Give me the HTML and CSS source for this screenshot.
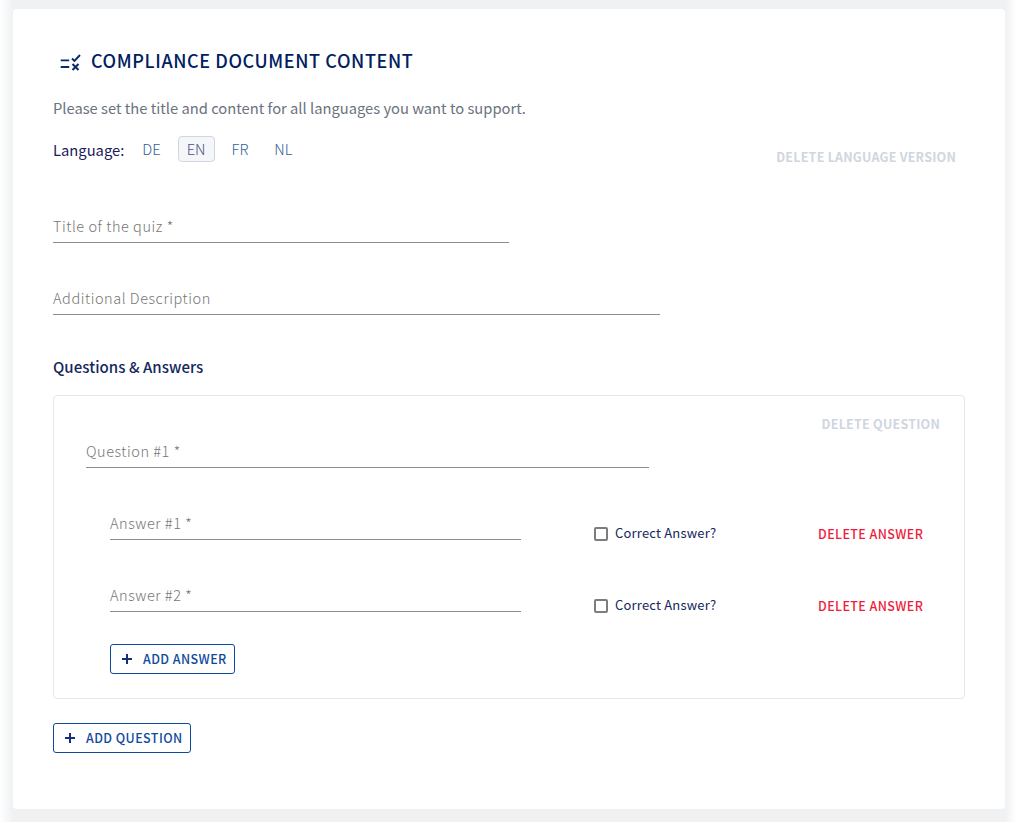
FILE: index.html
```html
<!DOCTYPE html>
<html lang="en">
<head>
<meta charset="utf-8">
<title>Compliance document content</title>
<link rel="stylesheet" href="styles.css">
</head>
<body>
<main class="card">
  <h1 class="title">
    <svg class="title-icon" width="22" height="20" viewBox="0 0 22 20" aria-hidden="true">
      <path d="M1.7 9.3h8.5M1.7 16h8.5" stroke="#0a2a66" stroke-width="1.8" fill="none"/>
      <path d="M13 7.5l2.5 2.5L21 4" stroke="#0a2a66" stroke-width="1.9" fill="none"/>
      <path d="M13.5 13l6 6M19.5 13l-6 6" stroke="#0a2a66" stroke-width="2" fill="none"/>
    </svg>
    <span class="title-text">COMPLIANCE DOCUMENT CONTENT</span>
  </h1>
  <p class="desc">Please set the title and content for all languages you want to support.</p>
  <div class="lang-row">
    <div class="langs">
      <span class="lang-label">Language:</span>
      <span class="lang">DE</span>
      <span class="lang active">EN</span>
      <span class="lang">FR</span>
      <span class="lang">NL</span>
    </div>
    <span class="action muted lang-delete">DELETE LANGUAGE VERSION</span>
  </div>
  <div class="field field-title">Title of the quiz *</div>
  <div class="field field-desc">Additional Description</div>
  <h2 class="section">Questions &amp; Answers</h2>
  <section class="question">
    <div class="question-head">
      <div class="field field-question">Question #1 *</div>
      <span class="action muted">DELETE QUESTION</span>
    </div>
    <div class="answer">
      <div class="field field-answer">Answer #1 *</div>
      <label class="check"><span class="box"></span>Correct Answer?</label>
      <span class="action danger">DELETE ANSWER</span>
    </div>
    <div class="answer">
      <div class="field field-answer">Answer #2 *</div>
      <label class="check"><span class="box"></span>Correct Answer?</label>
      <span class="action danger">DELETE ANSWER</span>
    </div>
    <button class="add add-answer"><span class="plus"></span>ADD ANSWER</button>
  </section>
  <button class="add add-question"><span class="plus"></span>ADD QUESTION</button>
</main>
</body>
</html>
```
FILE: styles.css
```css
* { box-sizing: border-box; }
html, body { margin: 0; height: 822px; overflow: hidden; }
body {
  background: linear-gradient(90deg, #fff 0, #eff1f3 13px, #eff1f3 1005px, #fff 1016px);
  font-family: "Noto Sans CJK JP", "Noto Sans", sans-serif;
  padding: 9px 11px 13px 13px;
}
.card {
  background: #fff;
  height: 800px;
  border-radius: 4px;
  padding: 40px;
}
.title {
  display: flex;
  align-items: center;
  margin: 0;
  height: 24px;
  font-size: 18px;
  line-height: 24px;
  font-weight: 500;
  letter-spacing: .6px;
  color: #002060;
}
.title-icon { margin: 0 10px 0 6px; }
.title-text { padding-bottom: 2px; }
.desc {
  margin: 23px 0 0;
  font-size: 14.72px;
  line-height: 24px;
  color: #6b7280;
}
.lang-row {
  display: flex;
  justify-content: space-between;
  margin-top: 12px;
  height: 38px;
  padding-right: 9px;
}
.langs { display: flex; align-items: center; height: 26px; margin-top: 4px; font-size: 14.75px; }
.lang-label { color: #1a1a5a; margin-right: 9px; }
.lang {
  height: 26px;
  line-height: 24px;
  margin-right: 8px;
  padding: 0 8px;
  font-weight: 300;
  color: #35609a;
  border: 1px solid transparent;
  border-radius: 4px;
}
.lang.active { background: #f4f6fa; border-color: #cfd6e2; color: #4d5180; }
.action { font-size: 12.5px; line-height: 18px; font-weight: 500; letter-spacing: .4px; white-space: nowrap; }
.muted { color: #cfd6df; font-weight: 700; letter-spacing: .23px; }
.danger { color: #ee1c3c; margin-top: 19px; }
.lang-delete { margin-top: 16px; }
.field {
  height: 32px;
  line-height: 24px;
  padding-top: 3px;
  font-size: 14.5px;
  font-weight: 300;
  color: #767676;
  border-bottom: 1px solid #8c8c8c;
  letter-spacing: .55px;
}
.field-title { width: 456px; margin-top: 41px; }
.field-desc { width: 607px; margin-top: 40px; }
.section {
  margin: 40px 0 0;
  font-size: 15px;
  line-height: 24px;
  font-weight: 500;
  letter-spacing: .05px;
  color: #14285c;
}
.question {
  margin-top: 16px;
  width: 912px;
  height: 304px;
  border: 1px solid #e3e6ec;
  border-radius: 4px;
  padding: 19px 24px 0 32px;
}
.question-head { display: flex; justify-content: space-between; align-items: flex-start; }
.field-question { width: 563px; margin-top: 21px; }
.answer {
  display: flex;
  align-items: center;
  margin-left: 24px;
  margin-top: 40px;
  height: 32px;
}
.field-answer { width: 411px; flex: none; }
.check {
  display: flex;
  align-items: center;
  margin-left: 73px;
  margin-top: 17px;
  width: 224px;
  flex: none;
  font-size: 13px;
  color: #14285c;
  letter-spacing: .2px;
}
.box {
  width: 14px;
  height: 14px;
  margin-top: 2px;
  border: 2px solid #7d7d7d;
  border-radius: 2px;
  margin-right: 7px;
}
.add {
  display: flex;
  align-items: center;
  height: 30px;
  background: #fff;
  border: 1px solid #0b4aa0;
  border-radius: 3px;
  padding: 0 7px 2px 11px;
  font-family: inherit;
  font-size: 12.5px;
  font-weight: 500;
  letter-spacing: .42px;
  color: #0f4a9c;
}
.add-answer { margin: 32px 0 0 24px; }
.add-question { margin-top: 24px; }
.plus {
  width: 10px;
  height: 10px;
  margin-top: 2px;
  margin-right: 11px;
  background:
    linear-gradient(#14307a, #14307a) center / 100% 2px no-repeat,
    linear-gradient(#14307a, #14307a) center / 2px 100% no-repeat;
}
```
